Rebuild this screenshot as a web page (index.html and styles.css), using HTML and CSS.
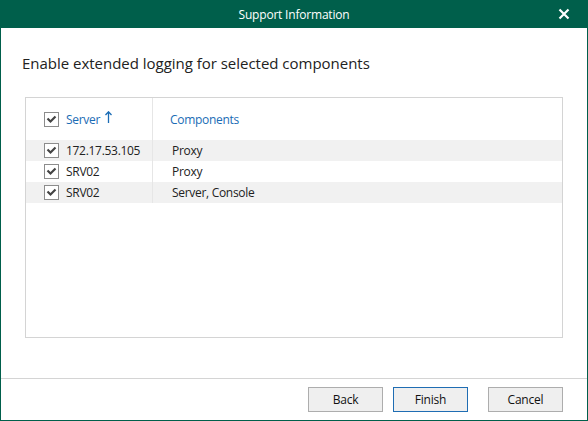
FILE: index.html
```html
<!DOCTYPE html>
<html>
<head>
<meta charset="utf-8">
<link rel="stylesheet" href="styles.css">
</head>
<body>
<div class="window">
  <div class="titlebar">
    <span class="title">Support Information</span>
    <span class="close">
      <svg width="12" height="12" viewBox="0 0 12 12"><path d="M1.5 1.5 L10.5 10.5 M10.5 1.5 L1.5 10.5" stroke="#fff" stroke-width="2.2" fill="none"/></svg>
    </span>
  </div>
  <div class="content">
    <h1 class="heading">Enable extended logging for selected components</h1>
    <div class="table">
      <div class="row header">
        <div class="cell c1">
          <span class="cb"><svg width="11" height="9" viewBox="0 0 11 9"><path d="M1.5 3.5 L4.5 6.5 L9.5 1.5" stroke="#444" stroke-width="2.2" fill="none"/></svg></span>
          <span class="hlabel">Server</span>
          <svg class="arrow" width="7" height="12" viewBox="0 0 7 12"><path d="M3.5 1 L3.5 12 M0.5 4 L3.5 0.8 L6.5 4" stroke="#1a6cb5" stroke-width="1.3" fill="none"/></svg>
        </div>
        <div class="cell c2"><span class="hlabel">Components</span></div>
      </div>
      <div class="row alt">
        <div class="cell c1"><span class="cb"><svg width="11" height="9" viewBox="0 0 11 9"><path d="M1.5 3.5 L4.5 6.5 L9.5 1.5" stroke="#444" stroke-width="2.2" fill="none"/></svg></span><span>172.17.53.105</span></div>
        <div class="cell c2">Proxy</div>
      </div>
      <div class="row">
        <div class="cell c1"><span class="cb"><svg width="11" height="9" viewBox="0 0 11 9"><path d="M1.5 3.5 L4.5 6.5 L9.5 1.5" stroke="#444" stroke-width="2.2" fill="none"/></svg></span><span>SRV02</span></div>
        <div class="cell c2">Proxy</div>
      </div>
      <div class="row alt">
        <div class="cell c1"><span class="cb"><svg width="11" height="9" viewBox="0 0 11 9"><path d="M1.5 3.5 L4.5 6.5 L9.5 1.5" stroke="#444" stroke-width="2.2" fill="none"/></svg></span><span>SRV02</span></div>
        <div class="cell c2">Server, Console</div>
      </div>
    </div>
  </div>
  <div class="footer">
    <button class="btn">Back</button>
    <button class="btn primary">Finish</button>
    <button class="btn cancel">Cancel</button>
  </div>
</div>
</body>
</html>
```
FILE: styles.css
```css
* { box-sizing: border-box; }
html, body { margin: 0; padding: 0; background: #fff; }
body { font-family: "Open Sans", "Noto Sans", sans-serif; }
.window {
  width: 588px;
  height: 421px;
  border: 1px solid #005f4b;
  border-top: none;
  display: flex;
  flex-direction: column;
  background: #fff;
}
.titlebar {
  height: 28px;
  margin: 0 -1px;
  background: #005f4b;
  color: #fff;
  display: flex;
  align-items: center;
  justify-content: center;
  position: relative;
  font-size: 12px;
}
.title { letter-spacing: -0.2px; }
.close {
  position: absolute;
  left: 558px;
  top: 8px;
  width: 12px;
  height: 12px;
  display: flex;
}
.content {
  flex: 1;
  padding: 0 24px 0 24px;
  display: flex;
  flex-direction: column;
}
.heading {
  margin: 24px 0 0 -3px;
  height: 45px;
  font-size: 15px;
  font-weight: normal;
  color: #222;
  letter-spacing: -0.02px;
  line-height: 22px;
}
.table {
  height: 241px;
  border: 1px solid #d4d4d4;
  margin-bottom: 40px;
}
.row {
  display: flex;
  height: 21px;
  align-items: center;
  font-size: 12px;
  color: #222;
  letter-spacing: -0.3px;
}
.row.header { height: 42px; }
.row.alt { background: #f1f1f1; }
.cell { display: flex; align-items: center; height: 100%; }
.c1 {
  width: 127px;
  padding-left: 18px;
  border-right: 1px solid #e6e6e6;
}
.c2 { padding-left: 19px; }
.header .c2 { padding-left: 17px; }
.cb {
  width: 15px;
  height: 15px;
  border: 1px solid #8c8c8c;
  background: #fff;
  display: inline-flex;
  align-items: center;
  justify-content: center;
  margin-right: 7px;
}
.hlabel { color: #1a6cb5; }
.arrow { margin-left: 5px; margin-top: -4px; }
.footer {
  height: 42px;
  border-top: 1px solid #d4d4d4;
  display: flex;
  justify-content: flex-end;
  align-items: flex-start;
  padding: 8px 24px 0 0;
  gap: 10px;
}
.btn {
  width: 75px;
  height: 25px;
  background: #efefef;
  border: 1px solid #adadad;
  font-family: "Open Sans", "Noto Sans", sans-serif;
  font-size: 12px;
  color: #111;
  padding: 0;
  letter-spacing: -0.2px;
}
.btn.primary { border-color: #1f6db3; }
.btn.cancel { margin-left: 10px; }
```
